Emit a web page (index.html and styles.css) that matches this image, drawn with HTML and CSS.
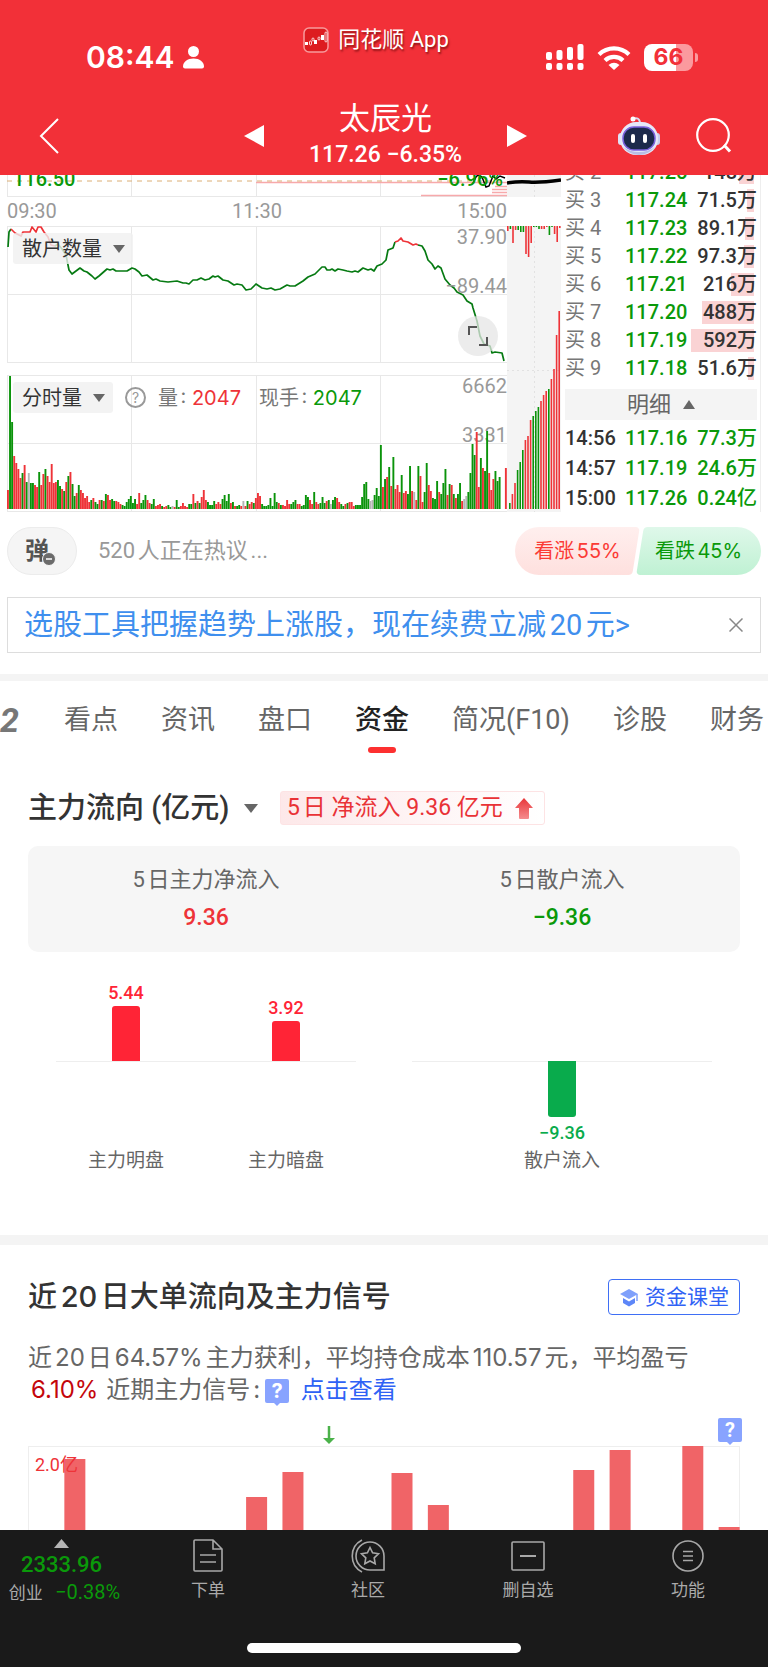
FILE: index.html
```html
<!DOCTYPE html>
<html lang="zh-CN">
<head>
<meta charset="utf-8">
<meta name="viewport" content="width=device-width, initial-scale=1">
<title>太辰光 117.26</title>
<link rel="stylesheet" href="styles.css">
<script src="charts.js" defer></script>
</head>
<body>
<header class="top">
  <div class="status">
    <div class="status-time">
      <span>08:44</span>
      <svg width="21" height="23" viewBox="0 0 21 23" fill="#fff" aria-hidden="true"><circle cx="10.500" cy="5.500" r="5.500"/><path d="M0 20.500C0 16 4.500 12.500 10.500 12.500S21 16 21 20.500Q21 22.500 19 22.500H2Q0 22.500 0 20.500Z"/></svg>
    </div>
    <div class="status-app">
      <svg width="26" height="26" viewBox="0 0 26 26" aria-hidden="true"><rect x="1" y="1" width="24" height="24" rx="5" fill="#dd1c20" stroke="#f79a9c" stroke-width="1.500"/><g fill="#fff"><rect x="2" y="15" width="3" height="3"/><rect x="11" y="13" width="3" height="4"/><rect x="18" y="8" width="3" height="5"/></g><g fill="none" stroke="#fff" stroke-width=".8"><rect x="6.500" y="14" width="2" height="4" rx="1"/><rect x="9" y="11" width="2" height="3" rx="1"/><rect x="15" y="10" width="2" height="3" rx="1"/><rect x="22" y="5" width="2" height="10" rx="1"/></g></svg>
      <span>同花顺 App</span>
    </div>
    <div class="status-icons">
      <svg width="38" height="26" viewBox="0 0 38 26" fill="#fff" aria-hidden="true"><rect x="0" y="8" width="6" height="8" rx="2"/><rect x="10.500" y="6" width="6" height="10" rx="2"/><rect x="21" y="3" width="6" height="13" rx="2"/><rect x="31.500" y="0" width="6" height="16" rx="2"/><rect x="0" y="19" width="6" height="7" rx="2"/><rect x="10.500" y="19" width="6" height="7" rx="2"/><rect x="21" y="19" width="6" height="7" rx="2"/><rect x="31.500" y="19" width="6" height="7" rx="2"/></svg>
      <svg width="34" height="25" viewBox="0 0 34 25" aria-hidden="true"><g fill="none" stroke="#fff" stroke-width="4.200"><path d="M2 9.500A21.500 21.500 0 0 1 32 9.500"/><path d="M8 15.500A13 13 0 0 1 26 15.500"/></g><path d="M11.500 20Q17 15.500 22.500 20L17 25Z" fill="#fff"/></svg>
      <span class="battery">66</span>
    </div>
  </div>
  <nav class="nav" aria-label="个股">
    <button class="icon-btn nav-back" aria-label="返回"><svg width="20" height="36" viewBox="0 0 20 36" fill="none" stroke="#fff" stroke-width="2"><path d="M19 1L2 18L19 35"/></svg></button>
    <div class="nav-stock">
      <button class="icon-btn" aria-label="上一只"><svg width="20" height="22" viewBox="0 0 20 22" fill="#fff"><path d="M0 11L20 0V22Z"/></svg></button>
      <h1 class="stock"><span class="stock-name">太辰光</span><span class="stock-price">117.26 −6.35%</span></h1>
      <button class="icon-btn" aria-label="下一只"><svg width="20" height="22" viewBox="0 0 20 22" fill="#fff"><path d="M20 11L0 0V22Z"/></svg></button>
    </div>
    <div class="nav-actions">
      <button class="icon-btn" aria-label="智能助手"><svg width="42" height="40" viewBox="0 0 42 40"><path d="M14 3Q22 0 22 8" fill="none" stroke="#d9dcf0" stroke-width="2"/><circle cx="15" cy="3" r="2.500" fill="#fff"/><rect x="0" y="17" width="6" height="12" rx="3" fill="#dfe2f6"/><rect x="36" y="17" width="6" height="12" rx="3" fill="#c9cdec"/><rect x="2" y="6" width="38" height="33" rx="16" fill="#e6e8f8"/><path d="M5 31Q12 39 21 39T37 31Q30 36 21 36T5 31Z" fill="#b9bde4"/><rect x="5" y="11" width="32" height="23" rx="11" fill="#1c2a4b" stroke="#7b62dc" stroke-width="1.500"/><rect x="13" y="18" width="4" height="9" rx="2" fill="#fff"/><rect x="25" y="18" width="4" height="9" rx="2" fill="#fff"/></svg></button>
      <button class="icon-btn" aria-label="搜索"><svg width="36" height="36" viewBox="0 0 36 36" fill="none" stroke="#fff" stroke-width="2.200"><circle cx="17" cy="17" r="15.800"/><path d="M28 27L34 33.500" stroke-width="3"/></svg></button>
    </div>
  </nav>
</header>

<main>
  <section class="quote" aria-label="分时">
    <div class="plots">
      <div class="plot plot-price">
        <svg class="fill" viewBox="0 0 500 22" preserveAspectRatio="none" aria-hidden="true"><path d="M.5 0V22M124.500 0V22M249.500 0V22M373.500 0V22M0 21.500H500" stroke="#e8e8e8" fill="none"/><path d="M249 7.500H500M414 20.500H500M485 17.500H500M485 14.500H500M488 11.500H500" stroke="#f7a9ab" stroke-width="1.400"/><path d="M0 6H500" stroke="#dcae74" stroke-dasharray="5 5"/><path d="M466 8L469 2L471 0L475 2L479 12L482 11L486 1L489 4L493 1L498 3" fill="none" stroke="#000" stroke-width="1.500"/></svg>
        <span class="mark mark-low">116.50</span><span class="mark mark-pct">−6.96%</span>
      </div>
      <div class="times"><span>09:30</span><span>11:30</span><span>15:00</span></div>
      <div class="plot plot-tall">
        <svg class="fill" viewBox="0 0 500 137" preserveAspectRatio="none" aria-hidden="true"><path d="M.5 0V137M124.500 0V137M249.500 0V137M373.500 0V137M0 .5H500M0 68.500H500M0 136.500H500" stroke="#e8e8e8" fill="none"/>
        <g fill="none" stroke-width="1.700" stroke-linejoin="round"><path stroke="#067a12" d="M1 21L2 6L4 3"/><path stroke="#ee3338" d="M4 3L8 7L14 10L16 6L23 6L25 1L29 6L31 1L34 1L37 6L41 11L44 19L48 20"/>
        <path stroke="#067a12" d="M48 20L51 18L55 23L59 29L62 44L65 48L69 45L73 42L77 45L80 46L85 50L88 53L92 50L100 43L103 44L106 43L109 45L113 45L120 45L125 42L128 43L132 46L135 50L140 49L146 54L149 53L153 55L161 56L170 55L176 57L179 57L182 58L186 54L190 54L194 52L198 54L202 53L206 50L208 51L211 50L216 54L221 55L227 59L230 58L235 59L239 64L244 63L249 58L255 62L260 63L264 62L268 64L273 63L280 59L283 60L288 60L296 55L301 51L308 48L315 41L318 41L320 44L323 44L325 43L328 45L331 43L336 44L340 45L345 46L348 45L351 46L356 42L361 44L364 43L367 45L370 40L375 38L379 34L381 24L386 22L388 16"/>
        <path stroke="#ee3338" d="M388 16L391 15L394 12L396 15L401 16L406 19L409 18L411 19"/><path stroke="#067a12" d="M411 19L415 20L418 25L421 34L425 38L428 43L431 40L434 42L438 53L443 59L447 62L450 66L456 69L460 75L465 78L466 82L470 95L473 110L477 118L483 120L485 127L488 126L495 127L497 135"/></g></svg>
        <label class="picker"><select aria-label="副图一"><option>散户数量</option></select><svg width="12" height="8" viewBox="0 0 12 8" fill="#666" aria-hidden="true"><path d="M0 0H12L6 8Z"/></svg></label>
        <span class="scale scale-top">37.90</span><span class="scale scale-mid">−89.44</span>
        <button class="expand" aria-label="全屏"><svg width="20" height="20" viewBox="0 0 20 20" fill="none" stroke="#555" stroke-width="2"><path d="M1 9V1H9M19 11V19H11"/></svg></button>
      </div>
      <div class="plot plot-tall">
        <svg class="fill" viewBox="0 0 500 137" preserveAspectRatio="none" aria-hidden="true"><path d="M.5 0V137M124.500 0V137M249.500 0V137M373.500 0V137M0 .5H500M0 68.500H500M0 136.500H500" stroke="#e8e8e8" fill="none"/></svg>
        <span class="scale scale-top">6662</span><span class="scale scale-mid">3331</span>
        <svg class="fill" id="volume" viewBox="0 0 500 137" preserveAspectRatio="none" aria-hidden="true"></svg>
        <div class="picker-row">
          <label class="picker"><select aria-label="副图二"><option>分时量</option></select><svg width="12" height="8" viewBox="0 0 12 8" fill="#666" aria-hidden="true"><path d="M0 0H12L6 8Z"/></svg></label>
          <button class="help" aria-label="说明">?</button>
          <span>量: <b class="up">2047</b></span><span>现手: <b class="down">2047</b></span>
        </div>
      </div>
    </div>
    <svg class="auction" id="auction" viewBox="0 0 54 337" preserveAspectRatio="none" aria-hidden="true"><path d="M0 0H54V22H0ZM0 51H54V337H0Z" fill="#f4f4f4"/><path d="M27.500 0V22M27.500 51V337M0 195.500H54" stroke="#e2e2e2" stroke-dasharray="2 3" fill="none"/><path d="M0 8Q12 6 22 7T54 5" stroke="#000" stroke-width="3.500" fill="none"/></svg>
    <div class="book">
      <table class="bids">
        <tr><th>买 2</th><td class="down">117.25</td><td class="qty"><i style="width:15px"></i><span>148万</span></td></tr>
        <tr><th>买 3</th><td class="down">117.24</td><td class="qty"><i style="width:7px"></i><span>71.5万</span></td></tr>
        <tr><th>买 4</th><td class="down">117.23</td><td class="qty"><i style="width:9px"></i><span>89.1万</span></td></tr>
        <tr><th>买 5</th><td class="down">117.22</td><td class="qty"><i style="width:10px"></i><span>97.3万</span></td></tr>
        <tr><th>买 6</th><td class="down">117.21</td><td class="qty"><i style="width:23px"></i><span>216万</span></td></tr>
        <tr><th>买 7</th><td class="down">117.20</td><td class="qty"><i style="width:52px"></i><span>488万</span></td></tr>
        <tr><th>买 8</th><td class="down">117.19</td><td class="qty"><i style="width:63px"></i><span>592万</span></td></tr>
        <tr><th>买 9</th><td class="down">117.18</td><td class="qty"><i style="width:6px"></i><span>51.6万</span></td></tr>
      </table>
      <button class="detail-btn">明细 <svg width="12" height="9" viewBox="0 0 12 9" fill="#666" aria-hidden="true"><path d="M6 0L12 9H0Z"/></svg></button>
      <table class="ticks">
        <tr><td>14:56</td><td class="down">117.16</td><td class="down end">77.3万</td></tr>
        <tr><td>14:57</td><td class="down">117.19</td><td class="down end">24.6万</td></tr>
        <tr><td>15:00</td><td class="down">117.26</td><td class="down end">0.24亿</td></tr>
      </table>
    </div>
  </section>

  <section class="talk">
    <button class="barrage" aria-label="弹幕">弹<svg width="14" height="14" viewBox="0 0 14 14" aria-hidden="true"><circle cx="7" cy="7" r="6.500" fill="#6b6b6b" stroke="#f5f5f5"/><path d="M4 7H10" stroke="#fff" stroke-width="1.500"/></svg></button>
    <a class="talk-text" href="#">520人正在热议...</a>
    <div class="votes"><button class="vote vote-up"><span>看涨55%</span></button><button class="vote vote-down"><span>看跌45%</span></button></div>
  </section>

  <aside class="promo">
    <a href="#">选股工具把握趋势上涨股，现在续费立减20元&gt;</a>
    <button class="icon-btn" aria-label="关闭"><svg width="14" height="14" viewBox="0 0 14 14" stroke="#888" stroke-width="1.500"><path d="M.5 .5L13.500 13.500M13.500 .5L.5 13.500"/></svg></button>
  </aside>

  <nav class="tabs" aria-label="栏目">
    <a class="tab-level" href="#" aria-label="Level 2">2</a>
    <a href="#">看点</a><a href="#">资讯</a><a href="#">盘口</a><a class="on" href="#" aria-current="page">资金</a><a href="#">简况(F10)</a><a href="#">诊股</a><a href="#">财务</a>
  </nav>

  <section class="flow">
    <div class="flow-head">
      <label class="flow-title"><select aria-label="主力流向"><option>主力流向 (亿元)</option></select><svg width="14" height="9" viewBox="0 0 14 9" fill="#666" aria-hidden="true"><path d="M0 0H14L7 9Z"/></svg></label>
      <span class="flow-tag">5日 净流入 9.36 亿元 <svg width="18" height="21" viewBox="0 0 18 21" aria-hidden="true"><defs><linearGradient id="rise" x2="0" y2="1"><stop stop-color="#e83538"/><stop offset="1" stop-color="#f58c8e"/></linearGradient></defs><path d="M9 0L18 10H14V20Q14 21 13 21H5Q4 21 4 20V10H0Z" fill="url(#rise)"/></svg></span>
    </div>
    <dl class="totals">
      <div><dt>5日主力净流入</dt><dd class="up">9.36</dd></div>
      <div><dt>5日散户流入</dt><dd class="down">−9.36</dd></div>
    </dl>
    <div class="bars">
      <div class="bar-group">
        <div class="bar-col"><div class="pos"><span>5.44</span><i style="height:55px"></i></div><div class="neg"></div><p>主力明盘</p></div>
        <div class="bar-col"><div class="pos"><span>3.92</span><i style="height:40px"></i></div><div class="neg"></div><p>主力暗盘</p></div>
      </div>
      <div class="bar-group">
        <div class="bar-col"><div class="pos"></div><div class="neg"><i style="height:56px"></i><span>−9.36</span></div><p>散户流入</p></div>
      </div>
    </div>
  </section>

  <section class="signal">
    <div class="signal-head">
      <h2>近20日大单流向及主力信号</h2>
      <a class="class-btn" href="#"><svg width="20" height="19" viewBox="0 0 20 19" aria-hidden="true"><path d="M10 1L19 6L10 11L1 6Z" fill="#7fa0fb"/><path d="M4 10L10 13.500L16 10V15L10 18.500L4 15Z" fill="#5d86f8"/><path d="M18 6V13" stroke="#7fa0fb" stroke-width="1.500"/></svg>资金课堂</a>
    </div>
    <p class="signal-text">近20日64.57%主力获利，平均持仓成本110.57元，平均盈亏 <b>6.10%</b> 近期主力信号:<span class="tip">?</span> <a href="#">点击查看</a></p>
    <div class="orders">
      <svg class="fill" id="orders" viewBox="0 0 712 84" preserveAspectRatio="none" aria-hidden="true"></svg>
      <span class="orders-max">2.0亿</span>
      <svg class="sell-mark" width="12" height="18" viewBox="0 0 12 18" aria-hidden="true"><path d="M6 0V14" stroke="#4bb24a" stroke-width="2.500"/><path d="M0 12H12L6 18Z" fill="#4bb24a"/></svg>
      <span class="tip orders-tip">?</span>
    </div>
  </section>
</main>

<footer class="dock">
  <nav class="dock-items" aria-label="底部">
    <a class="index" href="#"><svg width="15" height="9" viewBox="0 0 15 9" fill="#b5b5b5" aria-hidden="true"><path d="M7.500 0L15 9H0Z"/></svg><strong>2333.96</strong><span class="index-row">创业 <em>−0.38%</em></span></a>
    <a href="#"><svg width="32" height="34" viewBox="0 0 32 34" fill="none" stroke="#a8a8a8" stroke-width="1.600" aria-hidden="true"><path d="M3 1H21L30 10V31Q30 32 29 32H3Q2 32 2 31V2Q2 1 3 1ZM21 1V10H30M8 16H24M8 23H24"/></svg><span>下单</span></a>
    <a href="#"><svg width="36" height="34" viewBox="0 0 36 34" fill="none" stroke="#a8a8a8" stroke-width="1.600" aria-hidden="true"><path d="M20 3A14 14 0 0 1 34 17V31H20A14 14 0 0 1 20 3ZM12 1A18 18 0 0 0 12 33"/><path d="M20 8.500L22.600 13.800L28.500 14.700L24.200 18.900L25.200 24.800L20 22L14.800 24.800L15.800 18.900L11.500 14.700L17.400 13.800Z"/></svg><span>社区</span></a>
    <a href="#"><svg width="34" height="34" viewBox="0 0 34 34" fill="none" stroke="#a8a8a8" stroke-width="1.600" aria-hidden="true"><rect x="1" y="3" width="32" height="28" rx="1"/><path d="M9 17H25" stroke-width="2"/></svg><span>删自选</span></a>
    <a href="#"><svg width="34" height="34" viewBox="0 0 34 34" fill="none" stroke="#a8a8a8" stroke-width="1.600" aria-hidden="true"><circle cx="17" cy="17" r="15"/><path d="M12 12.500H22M12 17H22M12 21.500H22"/></svg><span>功能</span></a>
  </nav>
  <div class="home-bar"></div>
</footer>
</body>
</html>
```
FILE: styles.css
```css
* { box-sizing: border-box; }
body {
  margin: 0;
  background: #fff;
  color: #333;
  font-family: Roboto, "Noto Sans CJK SC", sans-serif;
  font-size: 20px;
  line-height: 28px;
  text-autospace: normal;
  overflow-x: hidden;
}
a { color: inherit; text-decoration: none; }
button, select { font: inherit; color: inherit; border: 0; margin: 0; padding: 0; background: none; }
select { appearance: none; }
svg { display: block; flex: none; }
h1, h2, p, dl, dd { margin: 0; font-weight: 400; }
b, em, i { font-style: normal; font-weight: 400; }
table { border-collapse: collapse; width: 100%; }
td, th { padding: 0; font-weight: 400; text-align: left; white-space: nowrap; }
.up { color: #ee3338; }
.down { color: #0a990a; }
.icon-btn { display: flex; align-items: center; }

/* header */
.top { height: 175px; background: #f23038; color: #fff; }
.status {
  display: grid;
  grid-template-columns: 1fr auto 1fr;
  height: 88px;
  padding: 0 70px 0 86px;
}
.status-time {
  display: flex; align-items: center; gap: 8px;
  padding-top: 26px;
  font: 600 30px/32px Inter, sans-serif;
}
.status-app {
  display: flex; align-items: center; gap: 9px;
  height: 80px;
  margin-right: 32px;
  font-size: 22px;
  text-shadow: 1px 2px 2px rgba(80, 0, 0, .6);
}
.status-icons { display: flex; align-items: center; justify-content: flex-end; gap: 13px; padding-top: 26px; }
.battery {
  position: relative;
  width: 49px; height: 27px;
  margin-right: 5px;
  border-radius: 8px;
  background: linear-gradient(90deg, #fff 66%, #fb9a9e 66%);
  color: #f23038;
  font: 700 23px/27px Inter, sans-serif;
  text-align: center;
}
.battery::after {
  content: ""; position: absolute; right: -5px; top: 9px;
  width: 3px; height: 9px; border-radius: 0 3px 3px 0; background: #fb9a9e;
}
.nav {
  display: grid;
  grid-template-columns: 1fr 284px 1fr;
  align-items: center;
  height: 87px;
  padding: 8px 36px 0 39px;
}
.nav-stock { display: flex; justify-content: space-between; align-items: center; }
.stock { display: flex; flex-direction: column; align-items: center; }
.stock-name { font-size: 31px; line-height: 38px; }
.stock-price { font-size: 23px; font-weight: 500; line-height: 34px; }
.nav-actions { display: flex; justify-content: flex-end; align-items: center; gap: 36px; }

/* intraday quote */
.quote {
  display: grid;
  grid-template-columns: 1fr 54px 200px;
  height: 337px;
  margin: 0 7px;
  overflow: hidden;
}
.plots { min-width: 0; }
.plot { position: relative; overflow: hidden; }
.plot-price { height: 22px; }
.plot-tall { height: 137px; margin-bottom: 12px; }
.fill { position: absolute; inset: 0; width: 100%; height: 100%; }
.times { display: flex; justify-content: space-between; height: 29px; line-height: 29px; color: #999; }
.mark { position: absolute; top: -10px; color: #0a990a; font-weight: 500; }
.mark-low { left: 6px; }
.mark-pct { right: 4px; }
.scale { position: absolute; right: 0; color: #999; line-height: 24px; }
.scale-top { top: 0; line-height: 22px; }
.scale-mid { top: 48px; }
.picker {
  position: relative;
  display: inline-flex; align-items: center; gap: 11px;
  height: 31px; margin: 7px 6px; padding: 0 8px 0 9px;
  border-radius: 3px;
  background: rgba(240, 240, 240, .8);
}
.picker-row { position: relative; display: flex; align-items: center; gap: 18px; color: #777; font-family: Inter, "Noto Sans CJK SC", sans-serif; }
.picker-row .picker { margin-right: -6px; color: #333; }
.help {
  width: 21px; height: 21px; margin-right: -6px;
  border: 2px solid #999; border-radius: 50%;
  color: #999; font-size: 14px; line-height: 17px;
}
.expand {
  position: absolute; right: 9px; top: 90px;
  display: grid; place-items: center;
  width: 40px; height: 40px; border-radius: 50%;
  background: rgba(230, 230, 230, .75);
}
.auction { width: 100%; height: 337px; }
.book {
  padding: 0 3px 0 4px;
  border-right: 1px solid #eee;
  border-bottom: 1px solid #e5e5e5;
  text-autospace: no-autospace;
}
.bids { margin-top: -17px; }
.bids th { width: 60px; color: #777; }
.bids tr { height: 28px; }
.bids .down, .qty span, .ticks td { font-weight: 500; }
.qty { position: relative; text-align: right; }
.qty i { position: absolute; right: 3px; top: 3px; height: 23px; background: #fad3d4; }
.qty span { position: relative; }
.detail-btn {
  display: flex; align-items: center; justify-content: center; gap: 12px;
  width: 100%; height: 31px; margin: 7px 0 3px;
  background: #f4f4f4; color: #666; font-size: 22px;
}
.ticks tr { height: 30px; }
.ticks td:first-child { width: 60px; }
.ticks .end { text-align: right; }

/* discussion row */
.talk { display: flex; align-items: center; height: 48px; margin: 15px 7px 22px; }
.barrage {
  position: relative;
  width: 70px; height: 48px; padding-right: 10px;
  border: 1px solid #ececec; border-radius: 24px;
  background: #f5f5f5; color: #555;
  font-size: 24px; font-weight: 700;
}
.barrage svg { position: absolute; left: 34px; top: 24px; }
.talk-text { margin-left: 21px; color: #999; font-size: 22px; }
.votes { display: flex; margin-left: auto; }
.vote { position: relative; width: 125px; height: 48px; overflow: hidden; font-family: Inter, "Noto Sans CJK SC", sans-serif; }
.vote span { position: relative; }
.vote::before { content: ""; position: absolute; top: 0; bottom: 0; border-radius: 4px; transform: skewX(-9deg); }
.vote-up { border-radius: 24px 0 0 24px; color: #fb3b35; }
.vote-up::before { left: -20px; right: 4px; background: linear-gradient(#ffefee, #fee0de); }
.vote-down { margin-left: -4px; border-radius: 0 24px 24px 0; color: #0a990a; }
.vote-down::before { left: 4px; right: -20px; background: linear-gradient(#dff8ea, #bff1d3); }

/* promo strip */
.promo {
  display: flex; align-items: center; justify-content: space-between;
  height: 56px; margin: 0 7px 21px; padding: 0 17px 0 16px;
  border: 1px solid #ddd;
  color: #3f8fee; font-size: 29px; line-height: 40px;
}
.promo a { white-space: nowrap; }

/* tabs */
.tabs {
  display: flex; gap: 43px;
  height: 82px; overflow: hidden;
  border-top: 7px solid #f4f4f4;
  color: #666; font-size: 27px; line-height: 78px;
}
.tabs a { position: relative; flex: none; }
.tabs .on { color: #222; font-weight: 500; }
.tabs .on::after {
  content: ""; position: absolute; left: 13px; right: 13px; top: 66px;
  height: 6px; border-radius: 3px; background: #fd3030;
}
.tabs .tab-level { width: 21px; color: #777; font-size: 34px; font-style: italic; font-weight: 700; }

/* capital flow */
.flow { padding: 35px 28px 60px; }
.flow-head { display: flex; align-items: center; gap: 22px; height: 34px; }
.flow-title { display: flex; align-items: center; gap: 14px; font-size: 29px; font-weight: 500; line-height: 34px; }
.flow-tag {
  display: flex; align-items: center; gap: 12px;
  height: 34px; padding: 0 11px 0 6px;
  border: 1px solid #fde3e4; border-radius: 3px;
  background: linear-gradient(90deg, #fde8e9, #fff);
  color: #e93236; font-size: 23px;
}
.totals {
  display: grid; grid-template-columns: 1fr 1fr;
  margin-top: 21px; padding: 18px 0 17px;
  border-radius: 10px; background: #f6f6f6;
  text-align: center; font-size: 22px;
}
.totals dt { line-height: 32px; color: #666; }
.totals dd { margin-top: 4px; line-height: 35px; font-weight: 500; font-size: 23px; }
.bars { display: grid; grid-template-columns: 1fr 1fr; text-align: center; }
.bar-group { position: relative; display: flex; padding: 0 18px; }
.bar-group::before { content: ""; position: absolute; left: 28px; right: 28px; top: 109px; height: 1px; background: #eee; }
.bar-col { flex: 1; font-size: 18px; line-height: 24px; }
.pos, .neg { position: relative; display: flex; flex-direction: column; align-items: center; }
.pos { height: 109px; justify-content: flex-end; color: #ff2436; font-weight: 500; }
.neg { height: 86px; color: #09ab4c; font-weight: 500; }
.pos i { width: 28px; margin-top: 1px; border-radius: 3px 3px 0 0; background: #ff2436; }
.neg i { width: 28px; margin-bottom: 4px; border-radius: 0 0 3px 3px; background: #09ab4c; }
.bar-col p { font-size: 19px; line-height: 28px; color: #666; }

/* 20-day signal */
.signal { border-top: 10px solid #f4f4f4; padding: 34px 28px 0; }
.signal-head { display: flex; align-items: center; justify-content: space-between; }
.signal-head h2 { font: 500 29px/34px Inter, "Noto Sans CJK SC", sans-serif; }
.class-btn {
  display: flex; align-items: center; gap: 6px;
  height: 36px; padding: 0 10px;
  border: 1px solid #3f6ff5; border-radius: 4px;
  color: #2f62f5; font-size: 21px;
}
.signal-text { margin-top: 27px; color: #666; font: 400 24px/32px Inter, "Noto Sans CJK SC", sans-serif; }
.signal-text b { margin: 0 1px 0 3px; color: #c4060b; }
.signal-text a { margin-left: 5px; color: #2f62f5; }
.tip {
  position: relative;
  display: inline-block;
  width: 24px; height: 24px; border-radius: 2px;
  background: #88a3ff; color: #fff;
  font-weight: 700; font-size: 20px; line-height: 24px; text-align: center;
}
.signal-text .tip { margin-left: 5px; }
.tip::after {
  content: ""; position: absolute; left: 9px; top: 24px;
  border: 3px solid transparent; border-top-color: #88a3ff;
}
.orders { position: relative; height: 84px; margin-top: 40px; }
.orders-max { position: absolute; left: 7px; top: 5px; color: #ee3338; font-size: 18px; text-autospace: no-autospace; }
.sell-mark { position: absolute; left: 295px; top: -20px; }
.orders-tip { position: absolute; right: -2px; top: -28px; }

/* bottom dock */
.dock { height: 137px; background: #1a1a1a; color: #aaa; }
.dock-items { display: grid; grid-template-columns: 4fr 5fr 5fr 5fr 5fr; height: 113px; }
.dock-items a { display: flex; flex-direction: column; align-items: center; padding-top: 9px; font-size: 17px; line-height: 34px; }
.dock-items .index { padding-right: 5px; }
.index strong { margin-top: 4px; color: #0a990a; font-size: 22px; font-weight: 500; line-height: 26px; }
.index-row { line-height: 28px; padding-left: 6px; }
.index-row em { margin-left: 8px; color: #0a990a; font-size: 20px; }
.home-bar { width: 274px; height: 10px; margin: 0 auto; border-radius: 5px; background: #fff; }
```
FILE: charts.js
```js
const NS = "http://www.w3.org/2000/svg";
const COLORS = { r: "#ee3338", g: "#0a930a", y: "#b5b5b5" };

function rect(svg, x, y, width, height, fill) {
  const el = document.createElementNS(NS, "rect");
  Object.entries({ x, y, width, height, fill }).forEach(([k, v]) => el.setAttribute(k, v));
  svg.append(el);
}
const parse = (s) => s.trim().split(/\s+/).map((t) => [COLORS[t[0]], Number(t.slice(1))]);

const volume = parse(`
r19 g133 g87 r53 r46 r40 r31 g36 r44 g27 y36 g26 g26 r24 r22 g37 r24 r35 g40 r33
r27 r45 r26 r27 g29 g23 r20 g18 r27 g33 r37 g25 g13 r16 g24 r19 r16 r11 r13 r7
g9 r11 g7 g5 r9 g9 r8 g15 r14 r9 g10 g8 r8 r7 r5 g4 g3 g7 g10 g13
g6 g10 r5 r16 g6 g9 g14 r9 r6 g5 g10 r3 r4 r5 g3 r2 r3 g4 g2 y3
r2 g9 g2 r3 r6 r3 r2 g5 g5 r15 g6 r8 g6 r12 r19 r9 g7 g4 g4 g8
r5 r7 r5 g10 g14 g8 g15 r6 g7 r3 g3 g4 r3 y8 r3 g8 r5 r7 g6 r11
r16 r13 g5 g3 g3 g4 g11 g3 g16 g7 r6 g4 r4 r3 r9 r5 g5 g7 g9 r5
r5 g3 g4 g14 g12 r9 r5 g17 r7 r5 g6 g12 g6 r8 g9 y5 g9 g12 r11 r7
g5 g3 r5 g6 r7 r7 r3 g4 g4 g4 g12 g25 g27 g10 y8 y9 g14 g21 g13 g64
r22 g30 r32 g42 r23 g52 r20 r24 r17 g34 r16 r18 g15 g43 r18 y17 r9 g43 r33 r7
g17 g46 r24 r18 g11 g10 g28 r17 g15 g26 g40 r14 g25 r24 g15 r11 g15 g26 r8 y10
y13 g17 g36 g65 g54 r77 r22 g51 r41 g38 g78 r36 r19 r30 g38 g28 g32 r0 r0 r41`);
const volumeSvg = document.getElementById("volume");
volume.forEach(([c, h], i) => rect(volumeSvg, i * 500 / 240, 134 - h, 1.9, h, c));

const auctionSvg = document.getElementById("auction");
parse("r5 g3 r17 r4 g4 g6 g6 r28 r31 r17 g1 g1 g3 r3 r3 r1 g9 g1 r8 r16 r2")
  .forEach(([c, h], i) => rect(auctionSvg, i * 2.6, 51, 1.6, h, c));
parse("g6 r15 r26 g39 g47 g59 r69 r73 r89 g93 g98 g102 r108 r114 r118 g120 r130 r140 r174 r198")
  .forEach(([c, h], i) => rect(auctionSvg, 2 + i * 2.6, 334 - h, 1.6, h, c));

const ordersSvg = document.getElementById("orders");
rect(ordersSvg, 0, 0, 712, 1, "#eee");
rect(ordersSvg, 0, 0, 1, 84, "#eee");
rect(ordersSvg, 711, 0, 1, 84, "#eee");
[0, 71, 0, 0, 0, 0, 33, 58, 0, 0, 57, 25, 0, 0, 0, 60, 80, 0, 84, 3]
  .forEach((h, i) => rect(ordersSvg, i * 36.35, 84 - h, 21, h, "#f06467"));
```
